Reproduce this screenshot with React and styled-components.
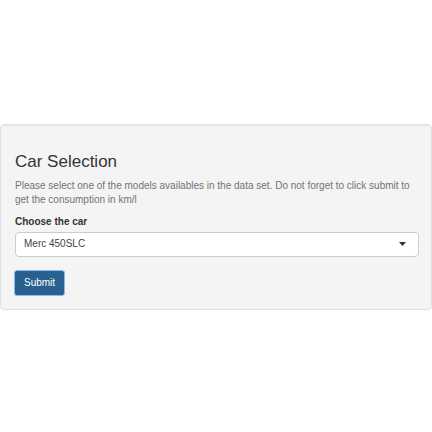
import React from "react";
import styled, { createGlobalStyle } from "styled-components";

const GlobalStyle = createGlobalStyle`
  *, *::before, *::after { box-sizing: border-box; }
  body {
    margin: 0;
    background: #fff;
    color: #333;
    font-family: "Liberation Sans", Arial, sans-serif;
    font-size: 10px;
    line-height: 14px;
  }
`;

const Page = styled.main`
  display: flex;
  flex-direction: column;
  justify-content: center;
  min-height: 100vh;
`;

const Well = styled.form`
  display: flex;
  flex-direction: column;
  margin-top: 1px;
  padding: 27px 12px 14px 14px;
  background: #f4f4f4;
  border: 1px solid #e0e0e0;
  border-radius: 4px;
  box-shadow: inset 0 1px 1px rgba(0, 0, 0, 0.05);
`;

const Title = styled.h3`
  margin: 0 0 7px;
  font-size: 17px;
  line-height: 20px;
  font-weight: 400;
`;

const HelpText = styled.p`
  margin: 0 0 8px;
  color: #737373;
`;

const Label = styled.label`
  align-self: flex-start;
  margin-bottom: 3px;
  font-weight: 700;
`;

const SelectBox = styled.div`
  display: grid;
  align-items: center;
  margin-bottom: 14px;
  > * { grid-area: 1 / 1; }
`;

const Select = styled.select`
  appearance: none;
  width: 100%;
  height: 25px;
  padding: 0 28px 0 8px;
  background: #fff;
  border: 1px solid #ccc;
  border-radius: 4px;
  color: #444;
  font: inherit;
`;

const Caret = styled.svg`
  justify-self: end;
  margin-right: 13px;
  pointer-events: none;
`;

const SubmitButton = styled.button`
  align-self: flex-start;
  height: 24px;
  padding: 0 8px;
  background: #286090;
  border: 1px solid #28609a;
  border-radius: 2px;
  box-shadow: 0 0 0 1px #8fb5ee;
  color: #fff;
  font: inherit;
`;

export default function App() {
  return (
    <>
      <GlobalStyle />
      <Page>
        <Well onSubmit={(event) => event.preventDefault()}>
          <Title>Car Selection</Title>
          <HelpText>
            Please select one of the models availables in the data set. Do not
            forget to click submit to get the consumption in km/l
          </HelpText>
          <Label htmlFor="car">Choose the car</Label>
          <SelectBox>
            <Select id="car" defaultValue="Merc 450SLC">
              <option>Merc 450SLC</option>
            </Select>
            <Caret width="7" height="4" viewBox="0 0 7 4" aria-hidden="true">
              <path d="M0 0h7L3.5 4z" fill="#333" />
            </Caret>
          </SelectBox>
          <SubmitButton type="submit">Submit</SubmitButton>
        </Well>
      </Page>
    </>
  );
}
